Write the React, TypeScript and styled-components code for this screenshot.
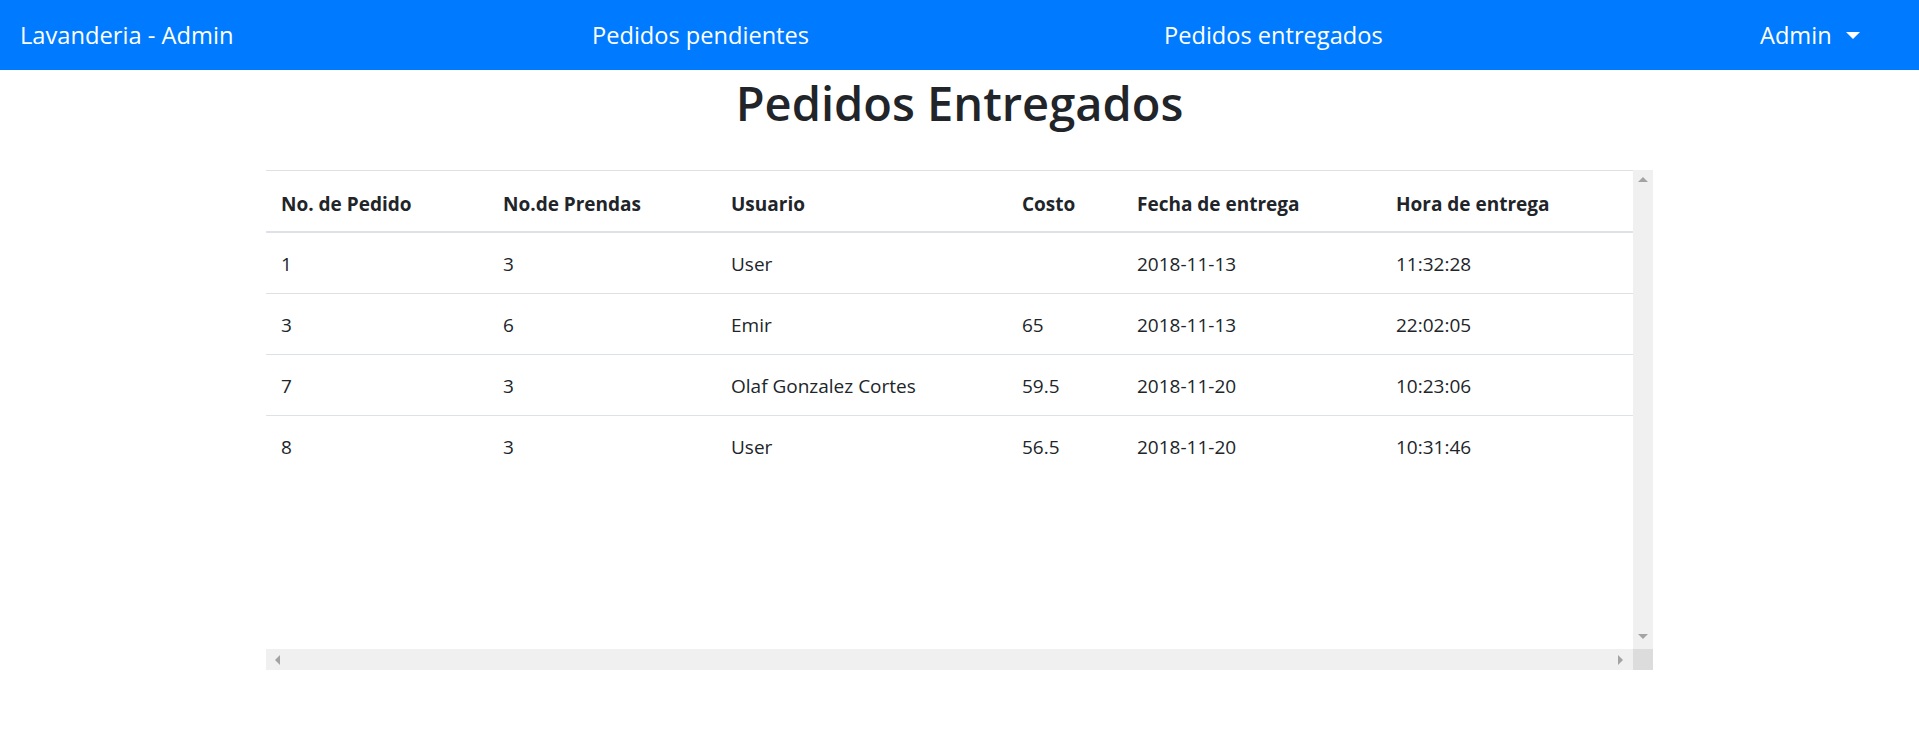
import React from "react";
import styled, { createGlobalStyle } from "styled-components";

const GlobalStyle = createGlobalStyle`
  html, body { margin: 0; padding: 0; background: #fff; }
  body {
    font-family: "Open Sans", "Noto Sans", "Liberation Sans", sans-serif;
    color: #212529;
  }
  * { box-sizing: border-box; }
`;

const NavBar = styled.nav`
  height: 70px;
  background: #007bff;
  display: grid;
  grid-template-columns: 572px 572px 596px auto;
  align-items: center;
  padding-left: 20px;
`;

const Brand = styled.a`
  color: #fff;
  font-size: 23.7px;
  text-decoration: none;
  white-space: nowrap;
`;

const NavLink = styled.a<{ $caret?: boolean }>`
  color: #fff;
  font-size: 23.6px;
  text-decoration: none;
  white-space: nowrap;
  ${(p) =>
    p.$caret &&
    `
    &::after {
      content: "";
      display: inline-block;
      margin-left: 14px;
      vertical-align: 5px;
      border-top: 7.5px solid #fff;
      border-left: 7px solid transparent;
      border-right: 7px solid transparent;
    }
  `}
`;

const Title = styled.h1`
  margin: 3px 0 37px;
  text-align: center;
  font-size: 47px;
  font-weight: 600;
  line-height: 60px;
`;

const ScrollFrame = styled.div`
  width: 1387px;
  margin: 0 auto;
  display: grid;
  grid-template-columns: 1367px 20px;
  grid-template-rows: 479px 21px;
`;

const Viewport = styled.div`
  overflow: hidden;
`;

const Table = styled.table`
  width: 1367px;
  border-collapse: collapse;
  table-layout: fixed;
  font-size: 19px;
`;

const Th = styled.th`
  text-align: left;
  font-weight: 700;
  padding: 18px 15px 12px;
  line-height: 30px;
  border-top: 1px solid #dee2e6;
  border-bottom: 2px solid #dee2e6;
  white-space: nowrap;
`;

const Td = styled.td`
  padding: 16px 15px 14px;
  line-height: 30px;
  border-top: 1px solid #dee2e6;
  white-space: nowrap;
`;

const VBar = styled.div`
  background: #f0f0f0;
  display: flex;
  flex-direction: column;
  justify-content: space-between;
  align-items: center;
  padding: 6px 0 9px;
`;

const HBar = styled.div`
  background: #f0f0f0;
  display: flex;
  justify-content: space-between;
  align-items: center;
  padding: 0 9px 0 8px;
`;

const Corner = styled.div`
  background: #dcdcdc;
`;

const Arrow = ({ dir }: { dir: "up" | "down" | "left" | "right" }) => {
  const pts = {
    up: "0,6 5,1 10,6",
    down: "0,1 5,6 10,1",
    left: "6,0 1,5 6,10",
    right: "1,0 6,5 1,10",
  }[dir];
  const horiz = dir === "left" || dir === "right";
  return (
    <svg width={horiz ? 7 : 10} height={horiz ? 10 : 7} viewBox={horiz ? "0 0 7 10" : "0 0 10 7"}>
      <polygon points={pts} fill="#a3a3a3" />
    </svg>
  );
};

const cols = [222, 228, 291, 115, 259, 252];
const headers = ["No. de Pedido", "No.de Prendas", "Usuario", "Costo", "Fecha de entrega", "Hora de entrega"];
const rows = [
  ["1", "3", "User", "", "2018-11-13", "11:32:28"],
  ["3", "6", "Emir", "65", "2018-11-13", "22:02:05"],
  ["7", "3", "Olaf Gonzalez Cortes", "59.5", "2018-11-20", "10:23:06"],
  ["8", "3", "User", "56.5", "2018-11-20", "10:31:46"],
];

export default function App() {
  return (
    <>
      <GlobalStyle />
      <NavBar>
        <Brand href="#">Lavanderia - Admin</Brand>
        <NavLink href="#">Pedidos pendientes</NavLink>
        <NavLink href="#">Pedidos entregados</NavLink>
        <NavLink href="#" $caret>Admin</NavLink>
      </NavBar>
      <Title>Pedidos Entregados</Title>
      <ScrollFrame>
        <Viewport>
          <Table>
            <colgroup>
              {cols.map((w, i) => (
                <col key={i} style={{ width: w }} />
              ))}
            </colgroup>
            <thead>
              <tr>
                {headers.map((h) => (
                  <Th key={h}>{h}</Th>
                ))}
              </tr>
            </thead>
            <tbody>
              {rows.map((r, i) => (
                <tr key={i}>
                  {r.map((c, j) => (
                    <Td key={j}>{c}</Td>
                  ))}
                </tr>
              ))}
            </tbody>
          </Table>
        </Viewport>
        <VBar>
          <Arrow dir="up" />
          <Arrow dir="down" />
        </VBar>
        <HBar>
          <Arrow dir="left" />
          <Arrow dir="right" />
        </HBar>
        <Corner />
      </ScrollFrame>
    </>
  );
}
